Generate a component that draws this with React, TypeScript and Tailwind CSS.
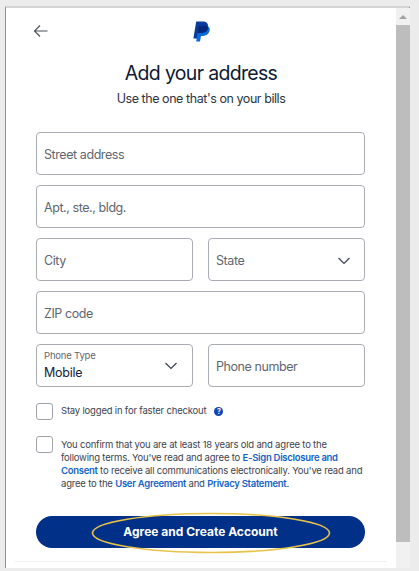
import React from "react";

const font = { fontFamily: "Inter, 'Liberation Sans', sans-serif" };

function Field({ label, className = "" }: { label: string; className?: string }) {
  return (
    <div className={`h-[43px] rounded-[4px] border border-[#a9adb3] bg-white flex items-center pl-[7px] pt-[3px] text-[12.5px] tracking-[-0.034em] text-[#5f6670] ${className}`}>
      {label}
    </div>
  );
}

function Chevron() {
  return (
    <svg width="14" height="8" viewBox="0 0 14 8" fill="none" stroke="#3a4250" strokeWidth="1.2" className="shrink-0">
      <path d="M1.5 1 L7 6.5 L12.5 1" />
    </svg>
  );
}

export default function App() {
  return (
    <div style={font} className="w-[419px] h-[571px] bg-[#ececec] pt-[6px] pl-[5px] pr-[9px] pb-[3px] overflow-hidden">
      <div className="h-full flex border-l border-r border-t-2 border-[#8f8f8f] border-t-[#d4d4d4] bg-white">
        <div className="w-[390px] shrink-0 flex flex-col">
          <div className="relative h-[124px] shrink-0 flex flex-col items-center">
            <svg width="16" height="14" viewBox="0 0 16 14" fill="none" stroke="#4a5058" strokeWidth="1.1" className="absolute left-[27px] top-[16px]">
              <path d="M14.5 7 H1.5 M7 1.5 L1.5 7 L7 12.5" />
            </svg>
            <svg width="17" height="21" viewBox="0 0 17 21" className="mt-[13px]">
              <path d="M3.2 0.5 H9.8 C14 0.5 15.6 3 14.8 6.4 C14 10 11.4 12 8 12 H5.6 L4.5 17.5 H0.4 Z" fill="#0b3a9a" />
              <path d="M5.6 4.6 H11.6 C15.4 4.6 17.3 6.4 16.6 9.6 C15.9 13 13.2 15 9.9 15 H8 L7 20.5 H3.2 Z" fill="#0a6ad6" />
              <path d="M5.6 4.6 H13.4 C15 5.6 15.4 7 14.8 8 C14.2 10.6 11.6 12 8 12 H4.2 Z" fill="#06277a" />
            </svg>
            <div className="mt-[17px] text-[19.5px] leading-[28px] tracking-[-0.035em] text-[#0e1a33]">Add your address</div>
            <div className="mt-[3px] text-[12.5px] leading-[18px] tracking-[-0.035em] text-[#2c3442]">Use the one that's on your bills</div>
          </div>

          <div className="pl-[30px] pr-[31px] flex flex-col gap-[10px]">
            <Field label="Street address" />
            <Field label="Apt., ste., bldg." />
            <div className="grid grid-cols-2 gap-[15px]">
              <Field label="City" />
              <div className="h-[43px] rounded-[4px] border border-[#a9adb3] flex items-center justify-between pl-[7px] pr-[13px] pt-[3px] text-[12.5px] tracking-[-0.034em] text-[#5f6670]">
                State
                <Chevron />
              </div>
            </div>
            <Field label="ZIP code" />
            <div className="grid grid-cols-2 gap-[15px]">
              <div className="h-[43px] rounded-[4px] border border-[#a9adb3] flex items-center justify-between pl-[7px] pr-[14px]">
                <div className="flex flex-col">
                  <span className="text-[9.5px] leading-[12px] tracking-[-0.02em] text-[#5f6670]">Phone Type</span>
                  <span className="text-[12.5px] leading-[19px] pt-[1px] tracking-[-0.02em] text-[#16213a]">Mobile</span>
                </div>
                <Chevron />
              </div>
              <Field label="Phone number" />
            </div>
          </div>

          <div className="pl-[30px] pr-[31px] mt-[16px] flex items-center">
            <div className="w-[17px] h-[17px] rounded-[3px] border border-[#a0a4aa] shrink-0" />
            <span className="ml-[8px] text-[9.5px] tracking-[-0.02em] text-[#3b4350]">Stay logged in for faster checkout</span>
            <span className="ml-[8px] w-[9px] h-[9px] rounded-full bg-[#1245b5] text-white text-[7px] leading-[9px] font-bold text-center">?</span>
          </div>

          <div className="pl-[30px] pr-[29px] mt-[16px] flex items-start">
            <div className="w-[17px] h-[17px] rounded-[3px] border border-[#a0a4aa] shrink-0" />
            <p className="ml-[8px] mt-[2px] text-[9.5px] leading-[13px] tracking-[-0.02em] text-[#3b4350]">
              You confirm that you are at least 18 years old and agree to the following terms. You've read and agree to{" "}
              <span className="text-[#1462c8] font-semibold tracking-[-0.03em]">E-Sign Disclosure and Consent</span> to receive all communications electronically. You've read and agree to the{" "}
              <span className="text-[#1462c8] font-semibold tracking-[-0.03em]">User Agreement</span> and{" "}
              <span className="text-[#1462c8] font-semibold tracking-[-0.03em]">Privacy Statement</span>.
            </p>
          </div>

          <div className="pl-[30px] pr-[31px] mt-[26px]">
            <div className="relative h-[32px] rounded-full bg-[#003087] flex items-center justify-center text-white font-bold text-[12px]">
              Agree and Create Account
              <svg width="240" height="44" viewBox="0 0 240 44" fill="none" className="absolute left-[55px] top-[-4px]">
                <ellipse cx="120" cy="21" rx="118.5" ry="19.5" stroke="#e8c34a" strokeWidth="1.6" />
              </svg>
            </div>
          </div>
          <div className="mt-[13px] mx-[9px] border-t border-[#f0f0f0]" />
        </div>

        <div className="w-[14px] shrink-0 flex flex-col bg-[#f1f1f1]">
          <div className="h-[17px] flex items-center justify-center">
            <div className="w-0 h-0 border-l-[4px] border-r-[4px] border-b-[4px] border-l-transparent border-r-transparent border-b-[#a3a3a3]" />
          </div>
          <div className="h-[517px] bg-[#bdbdbd]" />
        </div>
      </div>
    </div>
  );
}
